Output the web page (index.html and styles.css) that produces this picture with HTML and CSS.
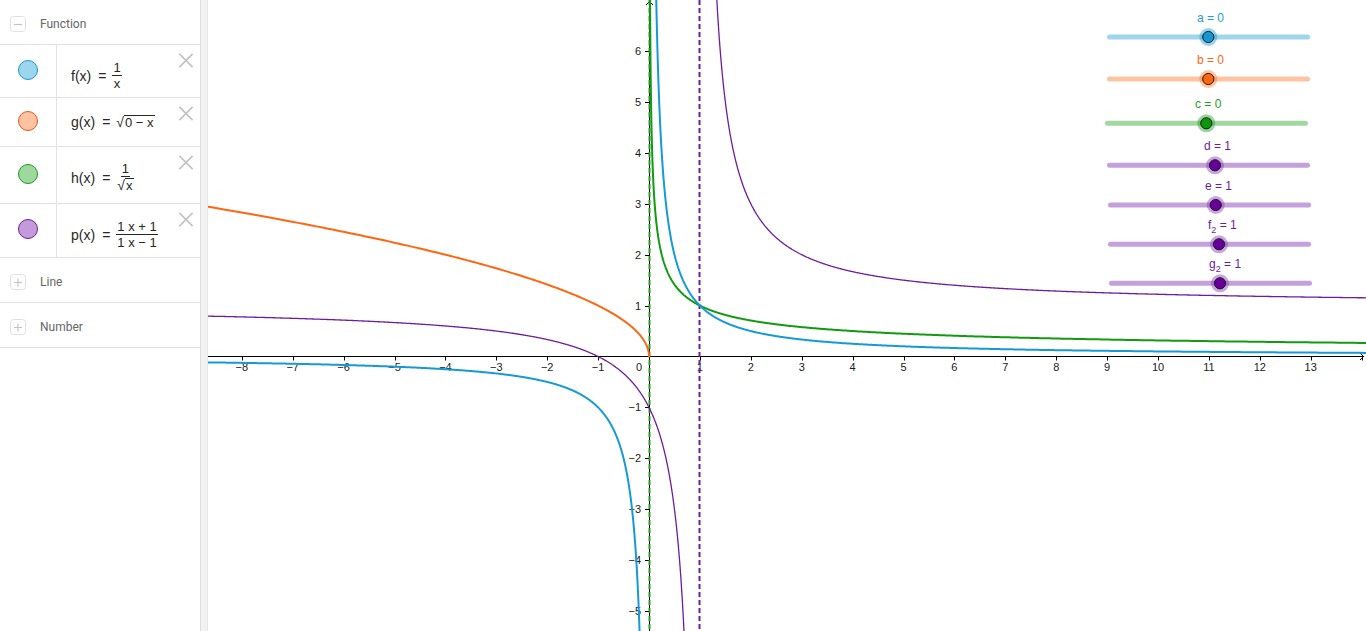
FILE: index.html
```html
<!DOCTYPE html>
<html>
<head>
<meta charset="utf-8">
<title>Graphing</title>
<link rel="stylesheet" href="styles.css">
</head>
<body>
<div class="app">
  <aside class="sidebar">
    <div class="section-head">
      <svg class="toggle" viewBox="0 0 16 16"><rect x="0.5" y="0.5" width="15" height="15" rx="3" class="tg-box"/><path d="M4 8.5H12" class="tg-mark"/></svg>
      <span class="sec-title">Function</span>
    </div>

    <div class="fn-row row-f">
      <div class="swatch-cell"><span class="dot dot-f"></span></div>
      <div class="formula"><span class="fn">f(x)</span><span class="eq">=</span><span class="frac"><span class="num">1</span><span class="den">x</span></span></div>
      <svg class="close" viewBox="0 0 16 16"><path d="M1 1L15 15M15 1L1 15"/></svg>
    </div>

    <div class="fn-row row-g">
      <div class="swatch-cell"><span class="dot dot-g"></span></div>
      <div class="formula"><span class="fn">g(x)</span><span class="eq">=</span><span class="sqrt"><span class="rad">√</span><span class="radicand">0 − x</span></span></div>
      <svg class="close" viewBox="0 0 16 16"><path d="M1 1L15 15M15 1L1 15"/></svg>
    </div>

    <div class="fn-row row-h">
      <div class="swatch-cell"><span class="dot dot-h"></span></div>
      <div class="formula"><span class="fn">h(x)</span><span class="eq">=</span><span class="frac"><span class="num">1</span><span class="den"><span class="sqrt"><span class="rad">√</span><span class="radicand">x</span></span></span></span></div>
      <svg class="close" viewBox="0 0 16 16"><path d="M1 1L15 15M15 1L1 15"/></svg>
    </div>

    <div class="fn-row row-p">
      <div class="swatch-cell"><span class="dot dot-p"></span></div>
      <div class="formula"><span class="fn">p(x)</span><span class="eq">=</span><span class="frac"><span class="num">1 x + 1</span><span class="den">1 x − 1</span></span></div>
      <svg class="close" viewBox="0 0 16 16"><path d="M1 1L15 15M15 1L1 15"/></svg>
    </div>

    <div class="section-head">
      <svg class="toggle" viewBox="0 0 16 16"><rect x="0.5" y="0.5" width="15" height="15" rx="3" class="tg-box"/><path d="M4 8.5H12M8 4.5V12.5" class="tg-mark"/></svg>
      <span class="sec-title">Line</span>
    </div>
    <div class="section-head">
      <svg class="toggle" viewBox="0 0 16 16"><rect x="0.5" y="0.5" width="15" height="15" rx="3" class="tg-box"/><path d="M4 8.5H12M8 4.5V12.5" class="tg-mark"/></svg>
      <span class="sec-title">Number</span>
    </div>
  </aside>

  <div class="divider"></div>

  <main class="graphics">
    <svg class="plot" viewBox="208 0 1158 631" width="1158" height="631">
      <g class="axes">
        <path d="M208 356.5H1364" class="axis"/>
        <path d="M649.5 631V1" class="axis"/>
        <path d="M1360 353L1363.5 356.5L1360 360" class="axis-arrow"/>
        <path d="M646 5L649.5 1.5L653 5" class="axis-arrow"/>
        <path id="ticks" class="axis"/>
      </g>
      <g class="xlabels">
        <text x="241.8" y="371">−8</text>
        <text x="292.7" y="371">−7</text>
        <text x="343.6" y="371">−6</text>
        <text x="394.5" y="371">−5</text>
        <text x="445.4" y="371">−4</text>
        <text x="496.3" y="371">−3</text>
        <text x="547.2" y="371">−2</text>
        <text x="598.1" y="371">−1</text>
        <text x="639" y="371">0</text>
        <text x="699.9" y="371">1</text>
        <text x="750.8" y="371">2</text>
        <text x="801.7" y="371">3</text>
        <text x="852.6" y="371">4</text>
        <text x="903.5" y="371">5</text>
        <text x="954.4" y="371">6</text>
        <text x="1005.3" y="371">7</text>
        <text x="1056.2" y="371">8</text>
        <text x="1107.1" y="371">9</text>
        <text x="1158" y="371">10</text>
        <text x="1208.9" y="371">11</text>
        <text x="1259.8" y="371">12</text>
        <text x="1310.7" y="371">13</text>
      </g>
      <g class="ylabels">
        <text x="641" y="55">6</text>
        <text x="641" y="106">5</text>
        <text x="641" y="157">4</text>
        <text x="641" y="208">3</text>
        <text x="641" y="259">2</text>
        <text x="641" y="310">1</text>
        <text x="641" y="411">−1</text>
        <text x="641" y="462">−2</text>
        <text x="641" y="513">−3</text>
        <text x="641" y="564">−4</text>
        <text x="641" y="615">−5</text>
      </g>

      <path d="M649.5 0V631" class="asym asym-green"/>
      <path d="M699.5 0V631" class="asym asym-purple"/>

      <path id="curve-p" class="curve c-purple"/>
      <path id="curve-g" class="curve c-orange"/>
      <path id="curve-h" class="curve c-green"/>
      <path id="curve-f" class="curve c-blue"/>

      <g class="sliders">
        <g class="slider s-blue">
          <text x="1197" y="22">a = 0</text>
          <path d="M1109.5 37H1307.5" class="track"/>
          <circle cx="1208.3" cy="37" r="9" class="halo"/>
          <circle cx="1208.3" cy="37" r="5.6" class="knob"/>
        </g>
        <g class="slider s-orange">
          <text x="1197" y="64">b = 0</text>
          <path d="M1109.5 79H1307.5" class="track"/>
          <circle cx="1208.3" cy="79" r="9" class="halo"/>
          <circle cx="1208.3" cy="79" r="5.6" class="knob"/>
        </g>
        <g class="slider s-green">
          <text x="1195" y="108">c = 0</text>
          <path d="M1107.5 123.3H1305.5" class="track"/>
          <circle cx="1206.3" cy="123.3" r="9" class="halo"/>
          <circle cx="1206.3" cy="123.3" r="5.6" class="knob"/>
        </g>
        <g class="slider s-purple">
          <text x="1204" y="150">d = 1</text>
          <path d="M1109.5 165.3H1307.5" class="track"/>
          <circle cx="1215" cy="165.3" r="9" class="halo"/>
          <circle cx="1215" cy="165.3" r="5.6" class="knob"/>
        </g>
        <g class="slider s-purple">
          <text x="1205" y="190">e = 1</text>
          <path d="M1110.5 205H1308.5" class="track"/>
          <circle cx="1215.7" cy="205" r="9" class="halo"/>
          <circle cx="1215.7" cy="205" r="5.6" class="knob"/>
        </g>
        <g class="slider s-purple">
          <text x="1208" y="229">f<tspan dy="4" class="sub">2</tspan><tspan dy="-4"> = 1</tspan></text>
          <path d="M1110.5 244.3H1308.5" class="track"/>
          <circle cx="1219" cy="244.3" r="9" class="halo"/>
          <circle cx="1219" cy="244.3" r="5.6" class="knob"/>
        </g>
        <g class="slider s-purple">
          <text x="1209" y="268">g<tspan dy="4" class="sub">2</tspan><tspan dy="-4"> = 1</tspan></text>
          <path d="M1111.5 283.3H1309.5" class="track"/>
          <circle cx="1220" cy="283.3" r="9" class="halo"/>
          <circle cx="1220" cy="283.3" r="5.6" class="knob"/>
        </g>
      </g>
    </svg>
  </main>
</div>
<script src="script.js"></script>
</body>
</html>
```

FILE: styles.css
```css
* { box-sizing: border-box; }
html, body { margin: 0; padding: 0; }
body {
  width: 1366px;
  height: 631px;
  overflow: hidden;
  background: #ffffff;
  font-family: "Liberation Sans", Arial, sans-serif;
}
.app { display: flex; height: 631px; }

/* ---------- sidebar ---------- */
.sidebar { width: 200px; flex: none; background: #ffffff; }
.section-head {
  height: 45px;
  border-bottom: 1px solid #e2e2e2;
  display: flex;
  align-items: center;
  padding-left: 10px;
  padding-top: 3px;
  font-family: Roboto, "Liberation Sans", sans-serif;
  font-size: 12px;
  color: #666666;
}
.toggle { width: 16px; height: 16px; margin-right: 14px; display: block; }
.tg-box { fill: #ffffff; stroke: #e0e0e0; stroke-width: 1; }
.tg-mark { stroke: #c4c4c4; stroke-width: 1.2; fill: none; }

.fn-row { display: flex; border-bottom: 1px solid #e2e2e2; }
.row-f { height: 53px; }
.row-g { height: 49px; }
.row-h { height: 57px; }
.row-p { height: 54px; }

.swatch-cell {
  width: 57px;
  flex: none;
  border-right: 1px solid #e2e2e2;
  display: flex;
  align-items: center;
  justify-content: center;
  padding-bottom: 3px;
}
.dot { width: 20px; height: 20px; border-radius: 50%; border: 1px solid; display: block; }
.dot-f { background: #9cd6ee; border-color: #1b96cc; }
.dot-g { background: #ffc3a2; border-color: #e4551a; }
.dot-h { background: #9fd89f; border-color: #1c9a1c; }
.dot-p { background: #c39bdb; border-color: #6e1c9e; }

.formula {
  flex: 1;
  display: flex;
  align-items: center;
  padding-left: 14px;
  font-size: 14px;
  color: #262626;
  white-space: nowrap;
}
.row-f .formula { padding-top: 9px; }
.row-h .formula { padding-top: 5px; }
.row-p .formula { padding-top: 8px; }
.eq { margin: 0 6px 0 7px; }
.frac { display: inline-flex; flex-direction: column; align-items: center; line-height: 13px; font-size: 13px; }
.num { padding: 0 1px 1px; border-bottom: 1px solid #262626; }
.den { padding: 1px 1px 0; }
.sqrt { display: inline-flex; align-items: flex-end; line-height: 15px; }
.rad { font-size: 14px; }
.radicand { border-top: 1px solid #262626; padding: 0 1px 0 1px; line-height: 14px; font-size: 13px; }

.close {
  align-self: flex-start;
  flex: none;
  width: 16px;
  height: 15px;
  margin: 8px 6px 0 0;
  fill: none;
  stroke: #c2c2c2;
  stroke-width: 1.7;
}

/* ---------- divider ---------- */
.divider {
  width: 8px;
  flex: none;
  background: #f2f2f2;
  border-left: 1px solid #dedede;
  border-right: 1px solid #e8e8e8;
}

/* ---------- graphics ---------- */
.graphics { flex: 1; background: #ffffff; overflow: hidden; }
.plot { display: block; }
.axis { stroke: #000000; stroke-width: 1; fill: none; }
.axis-arrow { stroke: #000000; stroke-width: 1; fill: none; }
.xlabels text { font-family: "Liberation Sans", Arial, sans-serif; font-size: 11px; fill: #1a1a1a; text-anchor: middle; }
.ylabels text { font-family: "Liberation Sans", Arial, sans-serif; font-size: 11px; fill: #1a1a1a; text-anchor: end; }

.asym { fill: none; stroke-width: 2; stroke-dasharray: 5 3; }
.asym-green { stroke: #1ea01e; }
.asym-purple { stroke: #6e1c9e; }

.curve { fill: none; stroke-linejoin: round; stroke-linecap: round; }
.c-blue { stroke: #159ad6; stroke-width: 2; }
.c-orange { stroke: #ff6611; stroke-width: 2; }
.c-green { stroke: #129b12; stroke-width: 2; }
.c-purple { stroke: #6e1c9e; stroke-width: 1.3; }

.slider text { font-family: "Liberation Sans", Arial, sans-serif; font-size: 12px; }
.slider .sub { font-size: 9px; }
.track { stroke-width: 5; stroke-linecap: round; fill: none; }
.halo { opacity: 0.45; }
.knob { stroke: #1a1a1a; stroke-width: 1; }

.s-blue text { fill: #1a9ed8; }
.s-blue .track { stroke: #9fd6eb; }
.s-blue .halo { fill: #1a9ed8; }
.s-blue .knob { fill: #1596d0; }

.s-orange text { fill: #ff6611; }
.s-orange .track { stroke: #fdc4a4; }
.s-orange .halo { fill: #ff7a30; }
.s-orange .knob { fill: #ff6611; }

.s-green text { fill: #1ea01e; }
.s-green .track { stroke: #a0d8a0; }
.s-green .halo { fill: #22a022; }
.s-green .knob { fill: #0c960c; }

.s-purple text { fill: #6e1c9e; }
.s-purple .track { stroke: #c4a1da; }
.s-purple .halo { fill: #8a3ab8; }
.s-purple .knob { fill: #660099; }
```

FILE: script.js
```js
(function () {
  var X0 = 649, Y0 = 356.5, S = 50.9;
  function pt(x, y) {
    return (X0 + x * S).toFixed(2) + ' ' + (Y0 - y * S).toFixed(2);
  }
  function branch(f, asym, side, d0, d1, n) {
    var d = '';
    for (var i = 0; i <= n; i++) {
      var dd = d0 * Math.pow(d1 / d0, i / n);
      var x = asym + side * dd;
      d += (i ? 'L' : 'M') + pt(x, f(x));
    }
    return d;
  }
  var inv = function (x) { return 1 / x; };
  var sq = function (x) { return Math.sqrt(Math.max(0, -x)); };
  var pf = function (x) { return (x + 1) / (x - 1); };
  var paths = {
    'curve-f': branch(inv, 0, -1, 0.12, 9, 900) + branch(inv, 0, 1, 0.12, 14.5, 900),
    'curve-g': branch(sq, 0, -1, 9, 0.000001, 900) + 'L' + pt(0, 0),
    'curve-h': branch(function (x) { return 1 / Math.sqrt(x); }, 0, 1, 0.015, 14.5, 900),
    'curve-p': branch(pf, 1, -1, 0.2, 10, 900) + branch(pf, 1, 1, 0.2, 13.5, 900)
  };
  for (var id in paths) {
    document.getElementById(id).setAttribute('d', paths[id]);
  }
  var t = '';
  for (var i = -8; i <= 14; i++) {
    if (i === 0) continue;
    var x = Math.round(X0 + i * S) + 0.5;
    t += 'M' + x + ' 356.5V360.5';
  }
  for (var j = -5; j <= 6; j++) {
    if (j === 0) continue;
    var y = Math.round(Y0 - j * S) + 0.5;
    t += 'M645 ' + y + 'H649.5';
  }
  document.getElementById('ticks').setAttribute('d', t);
})();
```
